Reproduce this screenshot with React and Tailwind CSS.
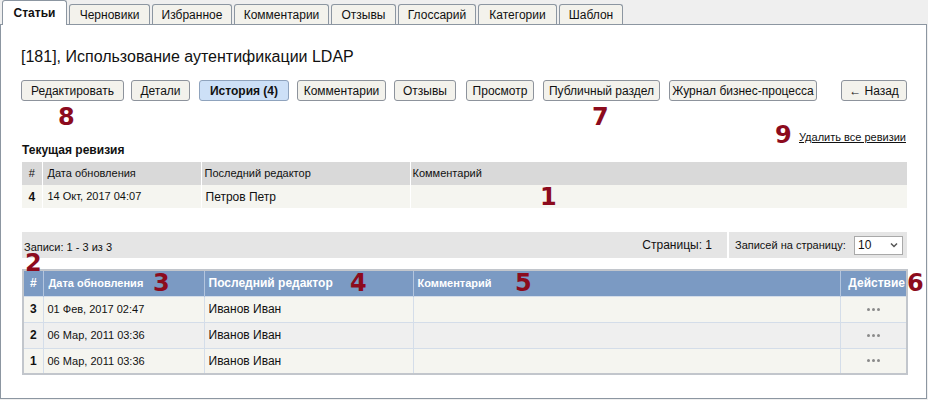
import React from 'react'

const TABS = [
  { label: 'Статьи', w: 'w-[65px]', active: true },
  { label: 'Черновики', w: 'w-[81px]' },
  { label: 'Избранное', w: 'w-[80px]' },
  { label: 'Комментарии', w: 'w-[95px]' },
  { label: 'Отзывы', w: 'w-[65px]' },
  { label: 'Глоссарий', w: 'w-[78px]' },
  { label: 'Категории', w: 'w-[79px]' },
  { label: 'Шаблон', w: 'w-[64px]' },
]

const BUTTONS = [
  { label: 'Редактировать', cls: 'w-[103px]' },
  { label: 'Детали', cls: 'w-[59px] ml-[7px]' },
  { label: 'История (4)', cls: 'w-[90px] ml-[9px] bg-[#cde0f7] border-[#8fa3bd] font-bold', active: true },
  { label: 'Комментарии', cls: 'w-[89px] ml-[8px]' },
  { label: 'Отзывы', cls: 'w-[62px] ml-[8px]' },
  { label: 'Просмотр', cls: 'w-[68px] ml-[10px]' },
  { label: 'Публичный раздел', cls: 'w-[117px] ml-[9px]' },
  { label: 'Журнал бизнес-процесса', cls: 'w-[148px] ml-[9px]' },
  { label: '← Назад', cls: 'w-[66px] ml-auto' },
]

const ROWS = [
  { n: 3, date: '01 Фев, 2017 02:47', editor: 'Иванов Иван', bg: 'bg-[#f5f5f0]' },
  { n: 2, date: '06 Мар, 2011 03:36', editor: 'Иванов Иван', bg: 'bg-[#efefef]' },
  { n: 1, date: '06 Мар, 2011 03:36', editor: 'Иванов Иван', bg: 'bg-[#f5f5f0]' },
]

// red annotation numbers drawn over the screenshot
const MARKS = [
  { n: '8', cls: 'left-[57px] top-[83px]' },
  { n: '7', cls: 'left-[591px] top-[83px]' },
  { n: '9', cls: 'left-[774px] top-[101px]' },
  { n: '1', cls: 'left-[539px] top-[163px]' },
  { n: '2', cls: 'left-[24px] top-[229px]' },
  { n: '3', cls: 'left-[152px] top-[249px]' },
  { n: '4', cls: 'left-[349px] top-[249px]' },
  { n: '5', cls: 'left-[514px] top-[249px]' },
  { n: '6', cls: 'left-[906px] top-[249px]' },
]

function Dots() {
  return (
    <div className="flex justify-center gap-[2px]">
      <span className="w-[3px] h-[3px] rounded-full bg-[#8a8a8a]" />
      <span className="w-[3px] h-[3px] rounded-full bg-[#8a8a8a]" />
      <span className="w-[3px] h-[3px] rounded-full bg-[#8a8a8a]" />
    </div>
  )
}

export default function App() {
  return (
    <div className="w-[928px] h-[400px] bg-[#efefef] text-[12px] text-[#111] overflow-hidden" style={{ fontFamily: '"Liberation Sans", Arial, sans-serif' }}>
      {/* tabs */}
      <div className="flex items-end h-[24px] pl-[2px] gap-[2px]">
        {TABS.map(t => (
          <div
            key={t.label}
            className={
              t.active
                ? `${t.w} h-[25px] -mb-px relative z-10 bg-white border border-b-0 border-[#8c96a1] rounded-t-[3px] flex items-center justify-center font-bold text-[12px]`
                : `${t.w} h-[20px] bg-[#f3f2ec] border border-b-0 border-[#8c96a1] rounded-t-[3px] flex items-center justify-center text-[12px]`
            }
          >
            {t.label}
          </div>
        ))}
      </div>

      {/* panel */}
      <div className="relative w-[927px] h-[375px] bg-white border border-[#8c96a1]">
        <div className="pl-[20px] pr-[19px] pt-[22px]">
          <h1 className="text-[16px] leading-[20px] text-[#111]">[181], Использование аутентификации LDAP</h1>

          <div className="flex mt-[13px]">
            {BUTTONS.map(b => (
              <div
                key={b.label}
                className={`h-[21px] border rounded-[3px] flex items-center justify-center text-[12px] whitespace-nowrap ${b.active ? '' : 'bg-[#f3f2ec] border-[#8d939c]'} ${b.cls}`}
              >
                {b.label}
              </div>
            ))}
          </div>

          <div className="flex justify-end mt-[29px] h-[14px]">
            <span className="underline text-[11px] leading-[14px] mr-[1px]">Удалить все ревизии</span>
          </div>

          <div className="font-bold text-[12px] leading-[14px] pl-[1px] -mt-[1px]">Текущая ревизия</div>

          {/* current revision */}
          <table className="mt-[5px] w-[885px] ml-[1px] table-fixed border-collapse text-[11px]">
            <colgroup>
              <col className="w-[20px]" />
              <col className="w-[159px]" />
              <col className="w-[209px]" />
              <col />
            </colgroup>
            <thead>
              <tr className="bg-[#d9d9d9] h-[23px]">
                <th className="font-normal text-center border-r border-white">#</th>
                <th className="font-normal text-left pl-[5px] border-r border-white">Дата обновления</th>
                <th className="font-normal text-left pl-[3px] border-r border-white">Последний редактор</th>
                <th className="font-normal text-left pl-[2px]">Комментарий</th>
              </tr>
            </thead>
            <tbody>
              <tr className="bg-[#f5f5f0] h-[23px]">
                <td className="text-center font-bold text-[12px] border-r border-white">4</td>
                <td className="pl-[5px] border-r border-white">14 Окт, 2017 04:07</td>
                <td className="pl-[4px] text-[12px] border-r border-white align-top pt-[3px]">Петров Петр</td>
                <td></td>
              </tr>
            </tbody>
          </table>

          {/* pager */}
          <div className="flex mt-[24px] ml-[1px] w-[885px] h-[26px] text-[11px]">
            <div className="flex-1 bg-[#e5e5e5] flex items-center justify-between pl-[2px] pr-[15px]">
              <span className="pt-[5px]">Записи: 1 - 3 из 3</span>
              <span className="text-[12px]">Страницы: 1</span>
            </div>
            <div className="w-[178px] ml-[2px] bg-[#e5e5e5] flex items-center pl-[6px] text-[11px] whitespace-nowrap">
              <span>Записей на страницу:</span>
              <div className="ml-auto mr-[4px] w-[49px] h-[19px] bg-white border border-[#a9a9a9] flex items-center justify-between pl-[3px] pr-[4px] text-[12px]">
                <span>10</span>
                <svg width="8" height="6" viewBox="0 0 8 6"><path d="M1 1.5 L4 4.5 L7 1.5" fill="none" stroke="#555" strokeWidth="1.5" /></svg>
              </div>
            </div>
          </div>

          {/* history table */}
          <table className="mt-[11px] ml-[1px] w-[886px] table-fixed border-collapse border-2 border-[#c2c6cc] text-[11px]">
            <colgroup>
              <col className="w-[20px]" />
              <col className="w-[161px]" />
              <col className="w-[209px]" />
              <col className="w-[427px]" />
              <col />
            </colgroup>
            <thead>
              <tr className="bg-[#7b9ac3] h-[26px] text-white">
                <th className="font-bold text-center border-r border-[#b3c5de] text-[12px]">#</th>
                <th className="font-bold text-left pl-[5px] border-r border-[#b3c5de]">Дата обновления</th>
                <th className="font-bold text-left pl-[4px] border-r border-[#b3c5de] text-[12px]">Последний редактор</th>
                <th className="font-bold text-left pl-[4px] border-r border-[#b3c5de]">Комментарий</th>
                <th className="font-bold text-right pr-[1px] text-[12px]">Действие</th>
              </tr>
            </thead>
            <tbody>
              {ROWS.map(r => (
                <tr key={r.n} className={`${r.bg} h-[26px] border-t border-[#d4dde9]`}>
                  <td className="text-center font-bold text-[12px] border-r border-[#d4dde9]">{r.n}</td>
                  <td className="pl-[4px] border-r border-[#d4dde9]">{r.date}</td>
                  <td className="pl-[4px] text-[12px] border-r border-[#d4dde9]">{r.editor}</td>
                  <td className="border-r border-[#d4dde9]"></td>
                  <td className="align-middle"><Dots /></td>
                </tr>
              ))}
            </tbody>
          </table>
        </div>

        {MARKS.map(m => (
          <span
            key={m.n}
            className={`absolute ${m.cls} text-[#8c0b1d] font-bold text-[24px] leading-[18px]`}
            style={{ fontFamily: '"DejaVu Sans", Verdana, sans-serif' }}
          >
            {m.n}
          </span>
        ))}
      </div>
    </div>
  )
}
